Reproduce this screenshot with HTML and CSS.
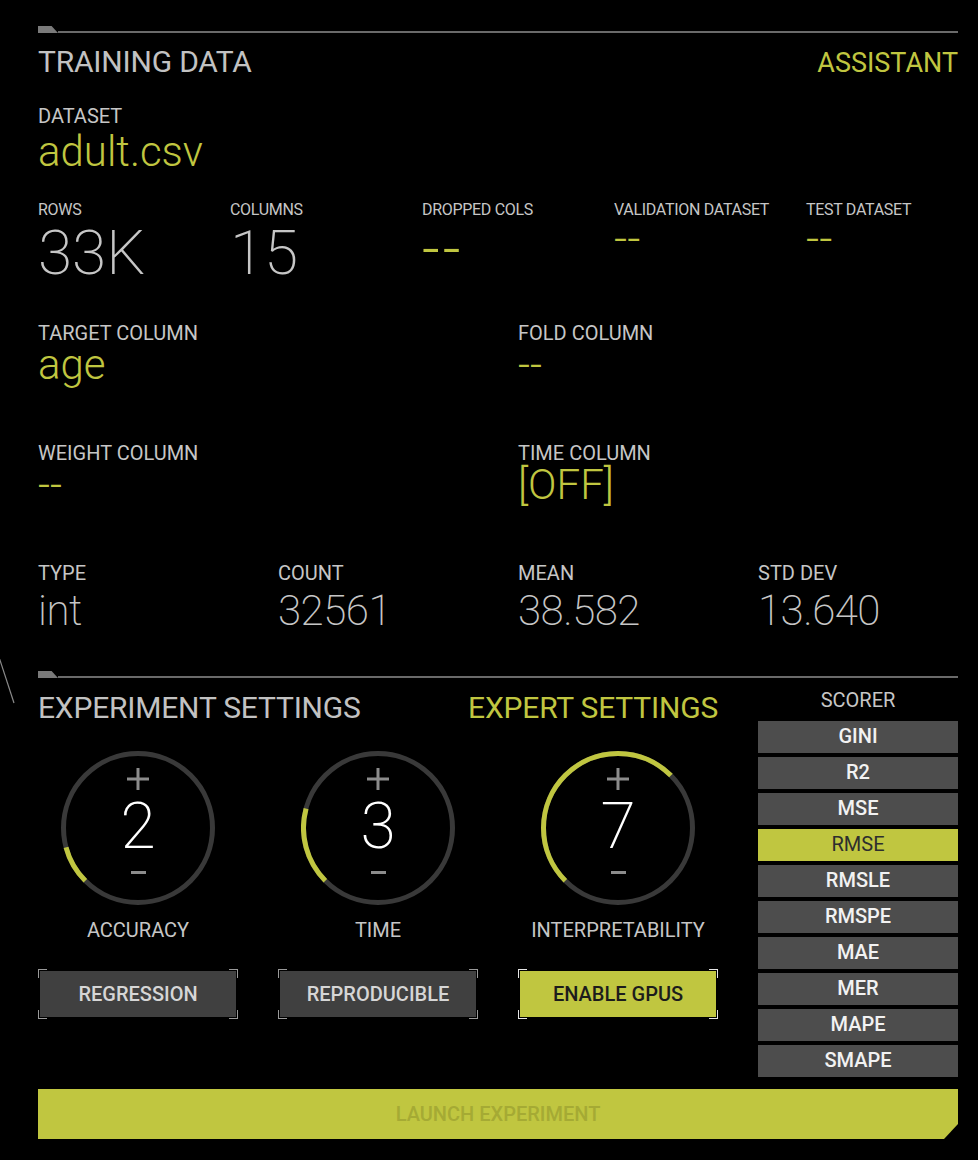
FILE: index.html
```html
<!DOCTYPE html>
<html lang="en">
<head>
<meta charset="utf-8">
<title>Experiment setup</title>
<link rel="stylesheet" href="styles.css">
</head>
<body>
<div class="page">
  <svg class="edge-line" width="16" height="60" viewBox="0 0 16 60"><line x1="-1" y1="2" x2="14" y2="48" stroke="#8a8a8a" stroke-width="1.2"/></svg>

  <section class="panel">
    <div class="rule"><span class="tab"></span><span class="line"></span></div>
    <div class="head">
      <h1 class="title">TRAINING DATA</h1>
      <span class="assist">ASSISTANT</span>
    </div>

    <div class="dataset">
      <div class="label">DATASET</div>
      <div class="value y">adult.csv</div>
    </div>

    <div class="stats5">
      <div class="stat"><div class="slabel">ROWS</div><div class="big">33K</div></div>
      <div class="stat"><div class="slabel">COLUMNS</div><div class="big">15</div></div>
      <div class="stat"><div class="slabel">DROPPED COLS</div><div class="big dash y">--</div></div>
      <div class="stat"><div class="slabel">VALIDATION DATASET</div><div class="small-val y">--</div></div>
      <div class="stat"><div class="slabel">TEST DATASET</div><div class="small-val y">--</div></div>
    </div>

    <div class="grid2 row-a">
      <div class="field"><div class="label">TARGET COLUMN</div><div class="value y">age</div></div>
      <div class="field"><div class="label">FOLD COLUMN</div><div class="value y">--</div></div>
    </div>

    <div class="grid2 row-b">
      <div class="field"><div class="label">WEIGHT COLUMN</div><div class="value y">--</div></div>
      <div class="field"><div class="label">TIME COLUMN</div><div class="value y">[OFF]</div></div>
    </div>

    <div class="grid4 row-c">
      <div class="field"><div class="label">TYPE</div><div class="num">int</div></div>
      <div class="field"><div class="label">COUNT</div><div class="num">32561</div></div>
      <div class="field"><div class="label">MEAN</div><div class="num">38.582</div></div>
      <div class="field"><div class="label">STD DEV</div><div class="num">13.640</div></div>
    </div>
  </section>

  <section class="panel settings">
    <div class="rule"><span class="tab"></span><span class="line"></span></div>
    <div class="settings-grid">
      <div class="left">
        <div class="head2">
          <h2 class="title">EXPERIMENT SETTINGS</h2>
          <span class="expert">EXPERT SETTINGS</span>
        </div>
        <div class="dials">
          <div class="dial-col">
            <div class="dial">
              <svg class="ring" width="154" height="154" viewBox="0 0 154 154">
                <circle cx="77" cy="77" r="74.5" fill="none" stroke="#393939" stroke-width="5"/>
                <circle cx="77" cy="77" r="74.5" fill="none" stroke="#c0c640" stroke-width="5" stroke-dasharray="39 600" transform="rotate(135 77 77)"/>
              </svg>
              <div class="face">
                <svg class="plus" width="22" height="22" viewBox="0 0 22 22"><path d="M11 0V22M0 11H22" stroke="#8c8c8c" stroke-width="3"/></svg>
                <div class="dial-num">2</div>
                <svg class="minus" width="15" height="3" viewBox="0 0 15 3"><rect width="15" height="3" fill="#8c8c8c"/></svg>
              </div>
            </div>
            <div class="dial-label">ACCURACY</div>
          </div>
          <div class="dial-col">
            <div class="dial">
              <svg class="ring" width="154" height="154" viewBox="0 0 154 154">
                <circle cx="77" cy="77" r="74.5" fill="none" stroke="#393939" stroke-width="5"/>
                <circle cx="77" cy="77" r="74.5" fill="none" stroke="#c0c640" stroke-width="5" stroke-dasharray="78 600" transform="rotate(135 77 77)"/>
              </svg>
              <div class="face">
                <svg class="plus" width="22" height="22" viewBox="0 0 22 22"><path d="M11 0V22M0 11H22" stroke="#8c8c8c" stroke-width="3"/></svg>
                <div class="dial-num">3</div>
                <svg class="minus" width="15" height="3" viewBox="0 0 15 3"><rect width="15" height="3" fill="#8c8c8c"/></svg>
              </div>
            </div>
            <div class="dial-label">TIME</div>
          </div>
          <div class="dial-col">
            <div class="dial">
              <svg class="ring" width="154" height="154" viewBox="0 0 154 154">
                <circle cx="77" cy="77" r="74.5" fill="none" stroke="#393939" stroke-width="5"/>
                <circle cx="77" cy="77" r="74.5" fill="none" stroke="#c0c640" stroke-width="5" stroke-dasharray="234 600" transform="rotate(135 77 77)"/>
              </svg>
              <div class="face">
                <svg class="plus" width="22" height="22" viewBox="0 0 22 22"><path d="M11 0V22M0 11H22" stroke="#8c8c8c" stroke-width="3"/></svg>
                <div class="dial-num">7</div>
                <svg class="minus" width="15" height="3" viewBox="0 0 15 3"><rect width="15" height="3" fill="#8c8c8c"/></svg>
              </div>
            </div>
            <div class="dial-label">INTERPRETABILITY</div>
          </div>
        </div>
        <div class="toggles">
          <div class="frame"><div class="btn">REGRESSION</div></div>
          <div class="frame"><div class="btn">REPRODUCIBLE</div></div>
          <div class="frame on"><div class="btn">ENABLE GPUS</div></div>
        </div>
      </div>
      <div class="scorer">
        <div class="scorer-label">SCORER</div>
        <div class="scorer-list">
          <div class="sc">GINI</div>
          <div class="sc">R2</div>
          <div class="sc">MSE</div>
          <div class="sc active">RMSE</div>
          <div class="sc">RMSLE</div>
          <div class="sc">RMSPE</div>
          <div class="sc">MAE</div>
          <div class="sc">MER</div>
          <div class="sc">MAPE</div>
          <div class="sc">SMAPE</div>
        </div>
      </div>
    </div>
    <div class="launch">LAUNCH EXPERIMENT</div>
  </section>
</div>
</body>
</html>
```

FILE: styles.css
```css
* { box-sizing: border-box; }

html, body {
  margin: 0;
  padding: 0;
  background: #000;
}

body {
  font-family: Roboto, "Liberation Sans", sans-serif;
  color: #c6c6c6;
}

.page {
  position: relative;
  width: 978px;
  height: 1160px;
  padding: 26px 20px 0 38px;
  overflow: hidden;
}

.edge-line {
  position: absolute;
  left: 0;
  top: 655px;
}

.rule {
  display: flex;
  align-items: flex-end;
  height: 7px;
}
.rule .tab {
  width: 20px;
  height: 7px;
  background: #7a7a7a;
  clip-path: polygon(0 0, 68% 0, 100% 100%, 0 100%);
}
.rule .line {
  flex: 1;
  height: 2px;
  background: #6a6a6a;
}

.title {
  margin: 0;
  font-weight: 400;
  font-size: 30px;
  line-height: 36px;
  letter-spacing: -0.2px;
  color: #c2c2c2;
}

.head {
  display: flex;
  justify-content: space-between;
  align-items: baseline;
  margin-top: 11px;
}
.assist {
  font-size: 27px;
  line-height: 36px;
  color: #c0c640;
}

.y { color: #c0c640; }

.label {
  font-size: 20px;
  line-height: 24px;
  white-space: nowrap;
  color: #c6c6c6;
}

.value {
  font-size: 42px;
  line-height: 40px;
  font-weight: 300;
}

.dataset { margin-top: 23px; }
.dataset .value { margin-top: 4px; }

.stats5 {
  display: grid;
  grid-template-columns: repeat(5, 152px);
  column-gap: 40px;
  margin-top: 28px;
}
.slabel {
  font-size: 16px;
  line-height: 20px;
  letter-spacing: -0.3px;
  white-space: nowrap;
  color: #c6c6c6;
}
.big {
  font-size: 62px;
  line-height: 64px;
  font-weight: 200;
  margin-top: 1px;
  color: #c6c6c6;
}
.big.dash {
  color: #c0c640;
  font-weight: 300;
  letter-spacing: 3px;
  transform: translateY(-4px);
}
.small-val {
  font-size: 46px;
  line-height: 35px;
  font-weight: 300;
  margin-top: 1px;
}

.grid2 {
  display: grid;
  grid-template-columns: 440px 440px;
  column-gap: 40px;
}
.row-a { margin-top: 36px; }
.row-b { margin-top: 56px; }

.grid4 {
  display: grid;
  grid-template-columns: repeat(4, 200px);
  column-gap: 40px;
}
.row-c { margin-top: 56px; }
.num {
  font-size: 42px;
  line-height: 44px;
  font-weight: 200;
  letter-spacing: -0.5px;
  margin-top: 4px;
  color: #c6c6c6;
}

.settings { margin-top: 38px; }

.settings-grid {
  display: grid;
  grid-template-columns: 680px 200px;
  column-gap: 40px;
  margin-top: 10px;
}

.head2 {
  display: flex;
  justify-content: space-between;
  align-items: baseline;
  margin-top: 2px;
}
.expert {
  font-size: 30px;
  line-height: 36px;
  letter-spacing: -0.2px;
  color: #c0c640;
}

.dials {
  display: grid;
  grid-template-columns: repeat(3, 200px);
  column-gap: 40px;
  margin-top: 25px;
}
.dial-col {
  display: flex;
  flex-direction: column;
  align-items: center;
}
.dial {
  display: grid;
  width: 154px;
  height: 154px;
}
.dial > * { grid-area: 1 / 1; }
.face {
  display: flex;
  flex-direction: column;
  align-items: center;
  padding-top: 17px;
}
.plus { display: block; }
.dial-num {
  font-size: 64px;
  line-height: 64px;
  font-weight: 200;
  color: #ffffff;
  margin-top: 5px;
}
.minus { display: block; margin-top: 12px; }
.dial-label {
  margin-top: 13px;
  font-size: 20px;
  line-height: 24px;
  color: #c6c6c6;
}

.toggles {
  display: grid;
  grid-template-columns: repeat(3, 200px);
  column-gap: 40px;
  margin-top: 27px;
}
.frame {
  --c: #9a9a9a;
  height: 50px;
  padding: 2px;
  display: flex;
  background:
    linear-gradient(var(--c), var(--c)) left top / 9px 1px no-repeat,
    linear-gradient(var(--c), var(--c)) left top / 1px 9px no-repeat,
    linear-gradient(var(--c), var(--c)) right top / 9px 1px no-repeat,
    linear-gradient(var(--c), var(--c)) right top / 1px 9px no-repeat,
    linear-gradient(var(--c), var(--c)) left bottom / 9px 1px no-repeat,
    linear-gradient(var(--c), var(--c)) left bottom / 1px 9px no-repeat,
    linear-gradient(var(--c), var(--c)) right bottom / 9px 1px no-repeat,
    linear-gradient(var(--c), var(--c)) right bottom / 1px 9px no-repeat;
}
.btn {
  flex: 1;
  background: #404040;
  color: #d6d6d6;
  font-size: 20px;
  font-weight: 500;
  line-height: 46px;
  text-align: center;
}
.frame.on { --c: #e6e6e6; }
.frame.on .btn {
  background: #c0c640;
  color: #1c1c1c;
}

.scorer-label {
  font-size: 20px;
  line-height: 24px;
  text-align: center;
  color: #c6c6c6;
}
.scorer-list {
  display: flex;
  flex-direction: column;
  gap: 4px;
  margin-top: 9px;
}
.sc {
  height: 32px;
  background: #4d4d4d;
  color: #f2f2f2;
  font-size: 20px;
  font-weight: 500;
  line-height: 30px;
  text-align: center;
}
.sc.active {
  background: #c0c640;
  color: #2e2e2e;
  font-weight: 400;
}

.launch {
  margin-top: 12px;
  height: 50px;
  background: #c0c640;
  clip-path: polygon(0 0, 100% 0, 100% calc(100% - 15px), calc(100% - 14px) 100%, 0 100%);
  color: #a5aa34;
  font-size: 20px;
  font-weight: 500;
  line-height: 50px;
  text-align: center;
}
```
